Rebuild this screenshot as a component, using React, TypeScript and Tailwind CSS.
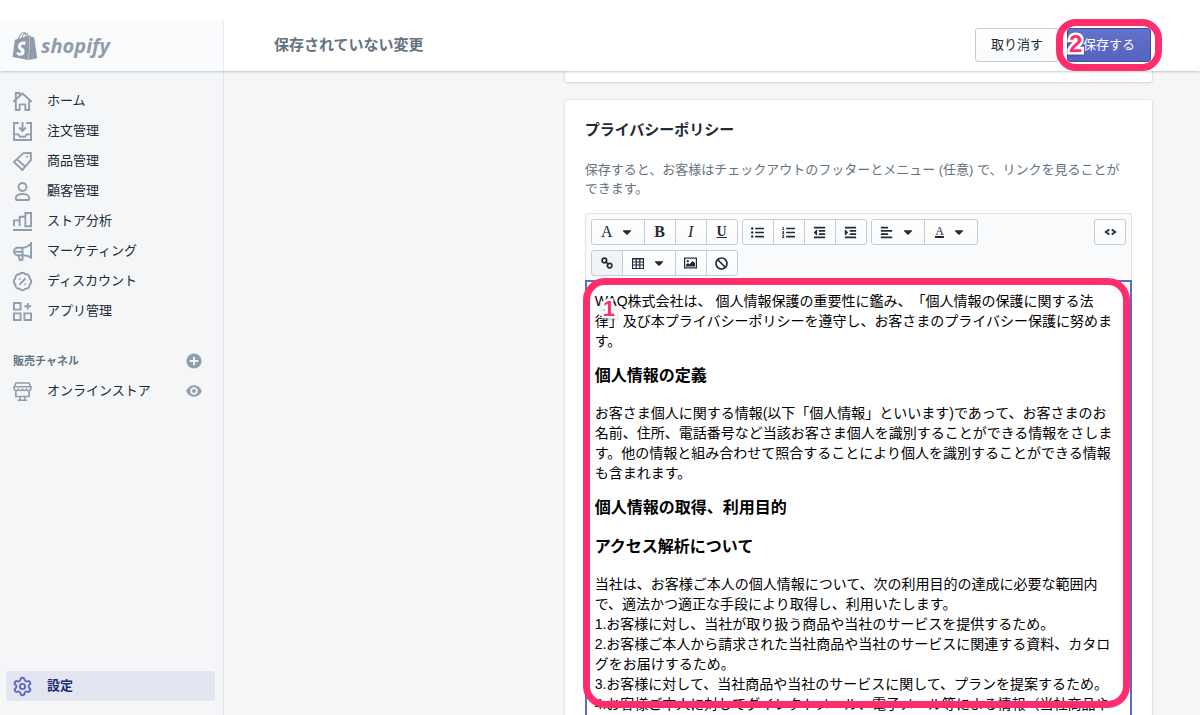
import type { ReactNode } from "react";
import { BadgePercent, Settings } from "lucide-react";
import { SiShopify } from "react-icons/si";
import {
  FaAlignLeft,
  FaBan,
  FaCaretDown,
  FaIndent,
  FaListOl,
  FaListUl,
  FaOutdent,
} from "react-icons/fa";

function NavIcon({ children }: { children: ReactNode }) {
  return (
    <svg viewBox="0 0 20 20" className="w-full h-full" fill="none" stroke="currentColor" strokeWidth="2" aria-hidden="true">
      {children}
    </svg>
  );
}

const navItems = [
  {
    label: "ホーム",
    icon: (
      <NavIcon>
        <path d="M1 9.800 10 1.600l9 8.200h-2V19h-4v-6H7v6H3V9.800z" strokeLinejoin="round" />
        <path d="M3 8V1h4v3" />
      </NavIcon>
    ),
  },
  {
    label: "注文管理",
    icon: (
      <NavIcon>
        <path d="M6 1H1v18h18V1h-5M10 0v9M6.500 5.800 10 9.300l3.500-3.500M1 13h4.500l2 2.500h5l2-2.500H19" />
      </NavIcon>
    ),
  },
  {
    label: "商品管理",
    icon: (
      <NavIcon>
        <path d="M11 1.200 18.800 1v7.500L9.800 19 1 10.400zM4 7.500l9 8" strokeLinejoin="round" />
        <circle cx="14.800" cy="5" r="1" fill="currentColor" stroke="none" />
      </NavIcon>
    ),
  },
  {
    label: "顧客管理",
    icon: (
      <NavIcon>
        <circle cx="10" cy="5.200" r="4.200" />
        <path d="M10 12.600c-4 0-7.100 1.800-7.100 4.400 0 1.400.7 2 2 2h10.200c1.300 0 2-.6 2-2 0-2.600-3.100-4.400-7.100-4.400z" />
      </NavIcon>
    ),
  },
  {
    label: "ストア分析",
    icon: (
      <NavIcon>
        <path d="M1 15V8.800h6M7 15V5h6M13 15V1h6v14zM0 19h20" />
      </NavIcon>
    ),
  },
  {
    label: "マーケティング",
    icon: (
      <NavIcon>
        <path d="M19 0v17.500M19 2c-3 2.600-5.500 4-8.500 4H5a4 4 0 0 0 0 8h5.500c3 0 5.500 0 8.500 2.600M10 6v12.500a.6.6 0 0 1-.6.6H7.200L5.500 14M1 10.200h9" />
      </NavIcon>
    ),
  },
  { label: "ディスカウント", icon: <BadgePercent className="w-full h-full scale-110" strokeWidth={2.200} aria-hidden="true" /> },
  {
    label: "アプリ管理",
    icon: (
      <NavIcon>
        <path d="M1 1h7v7H1zM1 12h7v7H1zM12 12h7v7h-7zM15.500 1v7M12 4.500h7" />
      </NavIcon>
    ),
  },
];

function NavLink({ icon, label }: { icon: ReactNode; label: string }) {
  return (
    <a href="#" className="flex-1 flex items-center gap-[15px] h-[30px] pl-[7px] text-[13px] text-[#212b36]">
      <span className="w-[19px] h-[19px] text-[#919eab]">{icon}</span>
      {label}
    </a>
  );
}

function Sidebar() {
  return (
    <aside className="w-[224px] shrink-0 flex flex-col border-r border-[#dfe3e8] px-1.5 pt-[15px] pb-3.5">
      <nav>
        <ul>
          {navItems.map((item) => (
            <li key={item.label} className="flex">
              <NavLink icon={item.icon} label={item.label} />
            </li>
          ))}
        </ul>
      </nav>

      <div className="mt-5 h-[30px] pl-[7px] pr-[15px] flex items-center justify-between">
        <h2 className="text-[11px] font-semibold text-[#637381]">販売チャネル</h2>
        <button type="button" aria-label="販売チャネルを追加" className="text-[#919eab]">
          <svg viewBox="0 0 16 16" className="w-4 h-4">
            <circle cx="8" cy="8" r="7.600" fill="currentColor" />
            <path d="M8 3.800v8.400M3.800 8h8.400" stroke="#f4f6f8" strokeWidth="1.800" />
          </svg>
        </button>
      </div>
      <div className="flex items-center pr-[15px]">
        <NavLink
          label="オンラインストア"
          icon={
            <NavIcon>
              <path
                d="M3.200 1h13.600L19 5.500v1a2.500 2.500 0 0 1-4.700 1.200 2.500 2.500 0 0 1-4.300 0 2.500 2.500 0 0 1-4.300 0A2.500 2.500 0 0 1 1 6.500v-1zM1 5h18M3 9v6.200h14V9M7.500 15.500V19M12.500 15.500V19M5 19.200h10"
                strokeWidth="1.700"
              />
            </NavIcon>
          }
        />
        <button type="button" aria-label="オンラインストアを表示" className="text-[#919eab]">
          <svg viewBox="0 0 16 16" className="w-4 h-4">
            <path d="M8 2.300C3.600 2.300.8 6.100.3 8c.5 1.900 3.300 5.700 7.700 5.700s7.200-3.800 7.700-5.700C15.200 6.100 12.400 2.300 8 2.300z" fill="currentColor" />
            <circle cx="8" cy="8" r="2.800" fill="currentColor" stroke="#f4f6f8" strokeWidth="1.800" />
          </svg>
        </button>
      </div>

      <a
        href="#"
        aria-current="page"
        className="mt-auto mr-0.5 flex items-center gap-[15px] h-[30px] pl-[7px] rounded-[3px] bg-[#e3e5f1] text-[13px] font-semibold text-[#202e78]"
      >
        <Settings className="w-[19px] h-[19px] scale-110 text-[#5c6ac4]" strokeWidth={2.200} aria-hidden="true" />
        設定
      </a>
    </aside>
  );
}

function TopBar() {
  return (
    <header className="relative z-10 mt-5 h-[51px] shrink-0 flex bg-white shadow-[0_2px_2px_-1px_rgba(33,43,54,0.250)]">
      <a
        href="#"
        aria-label="shopify"
        className="w-[224px] shrink-0 flex items-center gap-0.5 pl-[11px] bg-[#fafbfc] border-r border-[#eceff2] text-[#8f9cab]"
      >
        <SiShopify className="w-7 h-7" aria-hidden="true" />
        <span className="font-['Open_Sans',sans-serif] text-xl leading-6 font-bold italic">shopify</span>
      </a>
      <div className="flex-1 flex items-center justify-between pb-px pl-[50px] pr-[49px]">
        <h1 className="text-[15px] font-semibold text-[#637381]">保存されていない変更</h1>
        <div className="flex gap-2">
          <button
            type="button"
            className="h-[34px] px-[15px] border border-[#c4cdd5] rounded-[3px] bg-linear-to-b from-white to-[#f9fafb] text-[13px] text-[#212b36]"
          >
            取り消す
          </button>
          <div className="relative">
            <button
              type="button"
              className="h-[34px] px-[15px] border border-[#3f4eae] rounded-[3px] bg-linear-to-b from-[#6371c7] to-[#5563c1] text-[13px] text-white"
            >
              保存する
            </button>
            <span className="absolute -inset-x-[11px] -inset-y-[9px] rounded-[20px] border-[7px] border-[#ff2d6b] pointer-events-none" />
            <Marker className="left-0.5 top-1 text-2xl">2</Marker>
          </div>
        </div>
      </div>
    </header>
  );
}

function Marker({ className, children }: { className: string; children: ReactNode }) {
  return (
    <span
      className={`absolute font-bold leading-none pb-1 text-[#ff2d6b] [-webkit-text-stroke:5px_white] [paint-order:stroke_fill] drop-shadow-[0_1px_1px_rgba(0,0,0,0.300)] pointer-events-none ${className}`}
    >
      {children}
    </span>
  );
}

function ToolGroup({ children }: { children: ReactNode }) {
  return <div className="flex h-[26px] pl-px">{children}</div>;
}

function Tool({ label, dropdown, active, children }: { label: string; dropdown?: boolean; active?: boolean; children: ReactNode }) {
  return (
    <button
      type="button"
      aria-label={label}
      className={`-ml-px flex items-center justify-center gap-2 border border-[#c4cdd5] first:rounded-l-[3px] last:rounded-r-[3px] text-[13px] text-[#212b36] ${dropdown ? "w-[54px]" : "w-8"} ${active ? "bg-[#f1f3f5]" : "bg-linear-to-b from-white to-[#f9fafb]"}`}
    >
      {children}
      {dropdown && <FaCaretDown className="w-3.5 h-3.5" />}
    </button>
  );
}

function Toolbar() {
  return (
    <div role="toolbar" className="flex items-start p-[5px] pb-1 border border-b-0 border-[#dfe3e8] rounded-t-[3px] bg-[#fafbfc]">
      <div className="flex-1 flex flex-wrap gap-x-1 gap-y-[5px]">
        <ToolGroup>
          <Tool label="書式" dropdown>
            <span className="font-['Liberation_Serif',serif] text-base">A</span>
          </Tool>
          <Tool label="太字">
            <span className="font-['Liberation_Serif',serif] text-base font-bold">B</span>
          </Tool>
          <Tool label="斜体">
            <span className="font-['Liberation_Serif',serif] text-base italic">I</span>
          </Tool>
          <Tool label="下線">
            <span className="font-['Liberation_Serif',serif] text-sm font-bold underline">U</span>
          </Tool>
        </ToolGroup>
        <ToolGroup>
          <Tool label="箇条書き"><FaListUl /></Tool>
          <Tool label="番号付きリスト"><FaListOl /></Tool>
          <Tool label="インデント解除"><FaOutdent /></Tool>
          <Tool label="インデント"><FaIndent /></Tool>
        </ToolGroup>
        <ToolGroup>
          <Tool label="配置" dropdown><FaAlignLeft /></Tool>
          <Tool label="文字色" dropdown>
            <span className="font-['Liberation_Serif',serif] text-xs leading-[9px] border-b-2 border-[#212b36]">A</span>
          </Tool>
        </ToolGroup>
        <ToolGroup>
          <Tool label="リンク" active>
            <svg viewBox="0 0 12 12" className="w-3 h-3" fill="none" stroke="currentColor" strokeWidth="1.600">
              <circle cx="3.400" cy="3.400" r="2.300" />
              <circle cx="8.600" cy="8.600" r="2.300" />
              <path d="m4.200 4.200 3.600 3.600" />
            </svg>
          </Tool>
          <Tool label="表" dropdown>
            <svg viewBox="0 0 12 12" className="w-3 h-3" fill="none" stroke="currentColor">
              <path d="M.5 1.500h11v10H.5zM.5 2h11M4.200 1v10.500M7.800 1v10.500M.5 5h11M.5 8h11" strokeWidth="1.200" />
            </svg>
          </Tool>
          <Tool label="画像">
            <svg viewBox="0 0 13 12" className="w-[13px] h-3">
              <rect x=".6" y="1.100" width="11.800" height="9.800" fill="none" stroke="currentColor" strokeWidth="1.200" />
              <circle cx="3.800" cy="4.100" r="1.200" fill="currentColor" />
              <path d="M2 9.500V7.800l2-1.800 1.300 1.300L8.700 4 11 6.300v3.200z" fill="currentColor" />
            </svg>
          </Tool>
          <Tool label="書式をクリア"><FaBan /></Tool>
        </ToolGroup>
      </div>
      <ToolGroup>
        <Tool label="HTMLを表示">
          <svg viewBox="0 0 13 8" className="w-[13px] h-2" fill="none" stroke="currentColor" strokeWidth="1.800">
            <path d="M5.300 1.500 1.800 4l3.500 2.500M7.700 1.500 11.200 4 7.700 6.500" />
          </svg>
        </Tool>
      </ToolGroup>
    </div>
  );
}

function PolicyEditor() {
  return (
    <div className="relative">
      <div
        role="textbox"
        aria-multiline="true"
        aria-labelledby="privacy-title"
        contentEditable
        suppressContentEditableWarning
        className="pl-2 pr-3 py-[9px] border-2 border-[#5c6ac4] bg-white text-sm leading-5 text-black [text-spacing-trim:space-all] outline-none [&_h3]:mt-[13px] [&_h3]:mb-[15px] [&_h3]:text-base [&_h3]:leading-6 [&_h3]:font-bold"
      >
        <p>
          WAQ株式会社は、 個人情報保護の重要性に鑑み、「個人情報の保護に関する法律」及び本プライバシーポリシーを遵守し、お客さまのプライバシー保護に努めます。
        </p>
        <h3>個人情報の定義</h3>
        <p>
          お客さま個人に関する情報(以下「個人情報」といいます)であって、お客さまのお名前、住所、電話番号など当該お客さま個人を識別することができる情報をさします。他の情報と組み合わせて照合することにより個人を識別することができる情報も含まれます。
        </p>
        <h3>個人情報の取得、利用目的</h3>
        <h3>アクセス解析について</h3>
        <p>
          当社は、お客様ご本人の個人情報について、次の利用目的の達成に必要な範囲内で、適法かつ適正な手段により取得し、利用いたします。
          <br />
          1.お客様に対し、当社が取り扱う商品や当社のサービスを提供するため。
          <br />
          2.お客様ご本人から請求された当社商品や当社のサービスに関連する資料、カタログをお届けするため。
          <br />
          3.お客様に対して、当社商品や当社のサービスに関して、プランを提案するため。
          <br />
          4.お客様ご本人に対してダイレクトメール、電子メール等による情報（当社商品や
        </p>
      </div>
      {/* highlight frame */}
      <span className="absolute -left-0.5 right-0.5 -top-0.5 h-[430px] rounded-[22px] border-[7px] border-[#ff2d6b] pointer-events-none" />
      <Marker className="left-[18px] top-[18px] text-[22px]">1</Marker>
    </div>
  );
}

export default function App() {
  return (
    <div className="h-screen flex flex-col overflow-hidden bg-white font-['Liberation_Sans','Noto_Sans_CJK_JP',sans-serif]" lang="ja">
      <TopBar />
      <div className="flex-1 min-h-0 flex bg-[#f4f6f8]">
        <Sidebar />
        <main className="flex-1 min-w-0 pl-[47px] pr-12 overflow-hidden">
          <div className="ml-[33.333%] flex flex-col gap-[18px]">
            <section className="h-[11px] rounded-b-[3px] bg-white shadow-[0_0_0_1px_rgba(63,63,68,0.050),0_1px_3px_rgba(63,63,68,0.150)]" />
            <section className="p-5 rounded-[3px] bg-white shadow-[0_0_0_1px_rgba(63,63,68,0.050),0_1px_3px_rgba(63,63,68,0.150)]">
              <h2 id="privacy-title" className="text-[15px] leading-5 font-semibold text-[#212b36]">
                プライバシーポリシー
              </h2>
              <p className="mt-5 mb-[15px] text-[13px] leading-[19px] text-[#637381]">
                保存すると、お客様はチェックアウトのフッターとメニュー (任意) で、リンクを見ることができます。
              </p>
              <Toolbar />
              <PolicyEditor />
            </section>
          </div>
        </main>
      </div>
    </div>
  );
}
